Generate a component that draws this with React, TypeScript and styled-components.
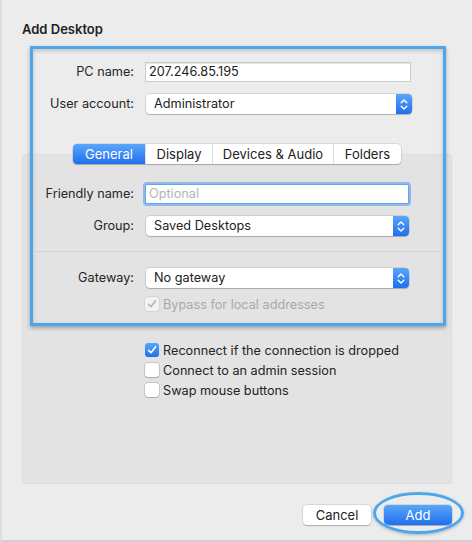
import React from 'react';
import styled, { createGlobalStyle } from 'styled-components';

const GlobalStyle = createGlobalStyle`
  html, body {
    margin: 0;
    padding: 0;
    background: #ececec;
  }
  body {
    font-family: Inter, 'Liberation Sans', Arial, sans-serif;
    font-size: 12.7px;
    color: #242424;
    -webkit-font-smoothing: antialiased;
  }
`;

const blueFill = 'linear-gradient(#5aa6fa, #1f6fee)';

const Window = styled.div`
  position: relative;
  width: 472px;
  height: 542px;
  box-sizing: border-box;
  background: #ececec;
  border-left: 2px solid #dedede;
  border-bottom: 2px solid #cfcfcf;
  padding: 21px 20px 0 20px;
  display: flex;
  flex-direction: column;
`;

const Title = styled.div`
  font-weight: 600;
  font-size: 13px;
  line-height: 16px;
  color: #222;
`;

const Form = styled.div<{ top: number; gap: number }>`
  display: grid;
  grid-template-columns: 112px 264px;
  column-gap: 11px;
  row-gap: ${({ gap }) => gap}px;
  margin-top: ${({ top }) => top}px;
  align-items: center;
`;

const Label = styled.label`
  text-align: right;
  line-height: 20px;
  color: #262626;
  white-space: nowrap;
`;

const TextField = styled.div<{ focused?: boolean; wide?: boolean }>`
  height: 20px;
  width: ${({ wide }) => (wide ? 266 : 264)}px;
  box-sizing: border-box;
  background: #fff;
  border: 1px solid ${({ focused }) => (focused ? '#6aa3e6' : '#cacaca')};
  box-shadow: ${({ focused }) =>
    focused ? '0 0 0 2px #8fb9ee' : 'inset 0 1px 0 #e4e4e4'};
  border-radius: ${({ focused }) => (focused ? 2 : 0)}px;
  padding: 0 3px;
  line-height: 18px;
  color: #222;
`;

const Placeholder = styled.span`
  color: #b4b4b4;
`;

const Popup = styled.div<{ wide?: boolean }>`
  display: flex;
  align-items: stretch;
  height: 20px;
  width: ${({ wide }) => (wide ? 266 : 263)}px;
  box-sizing: border-box;
  background: #fff;
  border-radius: 4px;
  box-shadow: 0 0 0 0.5px rgba(0, 0, 0, 0.18), 0 1px 1px rgba(0, 0, 0, 0.18);
  margin-left: 1px;
`;

const PopupText = styled.div`
  flex: 1;
  padding-left: 8px;
  line-height: 20px;
  color: #222;
`;

const Stepper = styled.div`
  width: 16px;
  border-radius: 0 4px 4px 0;
  background: ${blueFill};
  display: flex;
  align-items: center;
  justify-content: center;
`;

const Chevrons = () => (
  <svg width="8" height="13" viewBox="0 0 8 13" fill="none">
    <path d="M1.2 4.8 L4 2 L6.8 4.8" stroke="#fff" strokeWidth="1.4" strokeLinecap="round" strokeLinejoin="round" />
    <path d="M1.2 8.2 L4 11 L6.8 8.2" stroke="#fff" strokeWidth="1.4" strokeLinecap="round" strokeLinejoin="round" />
  </svg>
);

const Select = ({ value, wide }: { value: string; wide?: boolean }) => (
  <Popup wide={wide}>
    <PopupText>{value}</PopupText>
    <Stepper>
      <Chevrons />
    </Stepper>
  </Popup>
);

const TabStrip = styled.div`
  position: relative;
  z-index: 1;
  display: flex;
  align-self: flex-start;
  margin: 30px 0 0 51px;
  height: 20px;
  background: #fff;
  border-radius: 4px;
  box-shadow: 0 0 0 0.5px rgba(0, 0, 0, 0.16), 0 1px 1px rgba(0, 0, 0, 0.2);
`;

const Tab = styled.div<{ width: number; selected?: boolean }>`
  width: ${({ width }) => width}px;
  box-sizing: border-box;
  text-align: center;
  line-height: 20px;
  font-size: 13px;
  color: ${({ selected }) => (selected ? '#fff' : '#222')};
  background: ${({ selected }) => (selected ? blueFill : 'transparent')};
  border-radius: ${({ selected }) => (selected ? '4px 0 0 4px' : '0')};
  & + & {
    border-left: 1px solid #dedede;
  }
`;

const Panel = styled.div`
  margin-top: -10px;
  height: 330px;
  background: #e3e3e3;
  border-radius: 4px;
  box-shadow: inset 0 0 0 1px #dcdcdc;
  padding: 30px 0 0 0;
  box-sizing: border-box;
  display: flex;
  flex-direction: column;
`;

const Separator = styled.div`
  height: 1px;
  background: #d2d2d2;
  margin: 15px 12px 16px 14px;
`;

const CheckList = styled.div<{ top: number }>`
  display: flex;
  flex-direction: column;
  margin: ${({ top }) => top}px 0 0 123px;
`;

const CheckRow = styled.div<{ disabled?: boolean }>`
  display: flex;
  align-items: center;
  gap: 4px;
  height: 20px;
  color: ${({ disabled }) => (disabled ? '#a9a9a9' : '#242424')};
`;

const Box = styled.div<{ checked?: boolean; disabled?: boolean }>`
  width: 14px;
  height: 14px;
  box-sizing: border-box;
  border-radius: 3px;
  display: flex;
  align-items: center;
  justify-content: center;
  background: ${({ checked, disabled }) =>
    checked && !disabled ? blueFill : disabled ? '#f2f2f2' : '#fff'};
  box-shadow: ${({ checked, disabled }) =>
    checked && !disabled
      ? 'none'
      : disabled
      ? '0 0 0 0.5px rgba(0,0,0,0.12)'
      : '0 0 0 0.5px rgba(0,0,0,0.25), 0 1px 1px rgba(0,0,0,0.15)'};
`;

const Check = ({ color }: { color: string }) => (
  <svg width="10" height="10" viewBox="0 0 10 10" fill="none">
    <path d="M1.6 5.4 L4 7.8 L8.6 1.8" stroke={color} strokeWidth="1.6" strokeLinecap="round" strokeLinejoin="round" />
  </svg>
);

const Checkbox = ({
  label,
  checked,
  disabled,
}: {
  label: string;
  checked?: boolean;
  disabled?: boolean;
}) => (
  <CheckRow disabled={disabled}>
    <Box checked={checked} disabled={disabled}>
      {checked && <Check color={disabled ? '#b4b4b4' : '#fff'} />}
    </Box>
    <span>{label}</span>
  </CheckRow>
);

const Buttons = styled.div`
  display: flex;
  justify-content: flex-end;
  gap: 13px;
  margin-top: 21px;
`;

const Button = styled.div<{ primary?: boolean }>`
  position: relative;
  width: 68px;
  height: 20px;
  border-radius: 4px;
  text-align: center;
  line-height: 20px;
  font-size: 13px;
  color: ${({ primary }) => (primary ? '#fff' : '#222')};
  background: ${({ primary }) => (primary ? blueFill : '#fff')};
  box-shadow: 0 0 0 0.5px rgba(0, 0, 0, 0.18), 0 1px 1px rgba(0, 0, 0, 0.2);
`;

// annotation overlays drawn on top of the dialog
const Highlight = styled.div`
  position: absolute;
  left: 28px;
  top: 46px;
  width: 416px;
  height: 280px;
  box-sizing: border-box;
  border: 3px solid #4ba6ec;
  box-shadow: 0 2px 4px rgba(0, 0, 0, 0.3), inset 0 2px 4px rgba(0, 0, 0, 0.18);
  pointer-events: none;
`;

const Ring = styled.div`
  position: absolute;
  left: -11px;
  top: -13px;
  width: 91px;
  height: 42px;
  box-sizing: border-box;
  border: 3px solid #4ba6ec;
  border-radius: 50%;
  box-shadow: 0 1px 3px rgba(0, 0, 0, 0.25), inset 0 0 2px rgba(255, 255, 255, 0.8);
`;

export default function App() {
  return (
    <Window>
      <GlobalStyle />
      <Title>Add Desktop</Title>
      <Form top={25} gap={12}>
        <Label>PC name:</Label>
        <TextField wide>207.246.85.195</TextField>
        <Label>User account:</Label>
        <Select value="Administrator" wide />
      </Form>
      <TabStrip>
        <Tab width={72} selected>General</Tab>
        <Tab width={67}>Display</Tab>
        <Tab width={121}>Devices &amp; Audio</Tab>
        <Tab width={68}>Folders</Tab>
      </TabStrip>
      <Panel>
        <Form top={0} gap={12}>
          <Label>Friendly name:</Label>
          <TextField focused>
            <Placeholder>Optional</Placeholder>
          </TextField>
          <Label>Group:</Label>
          <Select value="Saved Desktops" />
        </Form>
        <Separator />
        <Form top={0} gap={0}>
          <Label>Gateway:</Label>
          <Select value="No gateway" />
        </Form>
        <CheckList top={6}>
          <Checkbox label="Bypass for local addresses" checked disabled />
        </CheckList>
        <CheckList top={26}>
          <Checkbox label="Reconnect if the connection is dropped" checked />
          <Checkbox label="Connect to an admin session" />
          <Checkbox label="Swap mouse buttons" />
        </CheckList>
      </Panel>
      <Buttons>
        <Button>Cancel</Button>
        <Button primary>
          Add
          <Ring />
        </Button>
      </Buttons>
      <Highlight />
    </Window>
  );
}
